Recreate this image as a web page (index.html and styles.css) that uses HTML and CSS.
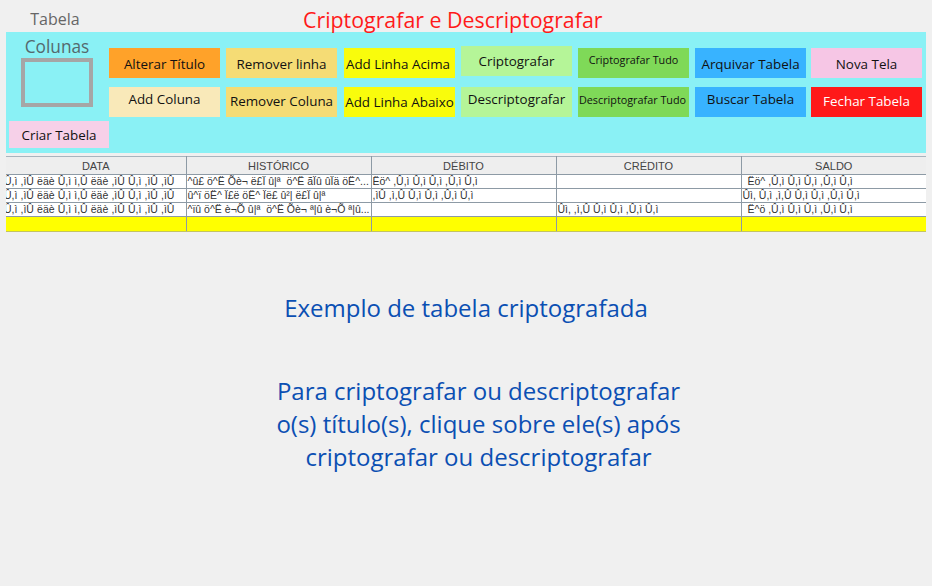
FILE: index.html
```html
<!DOCTYPE html>
<html lang="pt">
<head>
<meta charset="utf-8">
<title>Criptografar e Descriptografar</title>
<link rel="stylesheet" href="styles.css">
</head>
<body>
<header class="top">
  <div class="top-label">Tabela</div>
  <h1 class="top-title">Criptografar e Descriptografar</h1>
</header>
<section class="panel">
  <div class="cols-block">
    <div class="cols-label">Colunas</div>
    <div class="cols-box"></div>
  </div>
  <div class="btn r1 orange">Alterar Título</div>
  <div class="btn r1 sand">Remover linha</div>
  <div class="btn r1 yellow nudge">Add Linha Acima</div>
  <div class="btn r1 hi lime">Criptografar</div>
  <div class="btn r1 green small up">Criptografar Tudo</div>
  <div class="btn r1 blue">Arquivar Tabela</div>
  <div class="btn r1 pink">Nova Tela</div>
  <div class="btn r2 cream up">Add Coluna</div>
  <div class="btn r2 sand raised">Remover Coluna</div>
  <div class="btn r2 yellow">Add Linha Abaixo</div>
  <div class="btn r2 lime up">Descriptografar</div>
  <div class="btn r2 green small tight">Descriptografar Tudo</div>
  <div class="btn r2 blue up">Buscar Tabela</div>
  <div class="btn r2 red raised">Fechar Tabela</div>
  <div class="btn create">Criar Tabela</div>
</section>
<table class="grid">
  <colgroup><col class="c1"><col class="c2"><col class="c3"><col class="c4"><col class="c5"></colgroup>
  <thead>
    <tr><th>DATA</th><th>HISTÓRICO</th><th>DÉBITO</th><th>CRÉDITO</th><th>SALDO</th></tr>
  </thead>
  <tbody>
    <tr><td class="clip">Û,ì ,ìÛ ëäè Û,ì ì,Û ëäè ,ìÛ Û,ì ,ìÛ ,ìÛ</td><td class="left">^û£ ö^Ë Õè¬ ë£Ï û|ª  ö^Ë ãÏû ûÏä öË^...</td><td class="left">Ëö^ ,Û,ì Û,ì Û,ì ,Û,ì Û,ì</td><td></td><td class="mid">Ëö^ ,Û,ì Û,ì Û,ì ,Û,ì Û,ì</td></tr>
    <tr><td class="clip">Û,ì ,ìÛ ëäè Û,ì ì,Û ëäè ,ìÛ Û,ì ,ìÛ ,ìÛ</td><td class="left">û^ï öË^ Ï£ë öË^ Ïë£ û²| ë£Ï û|ª</td><td class="left">,ìÛ ,ì,Û Û,ì Û,ì ,Û,ì Û,ì</td><td></td><td class="left">Ûì, Û,ì ,ì,Û Û,ì Û,ì ,Û,ì Û,ì</td></tr>
    <tr><td class="clip">Û,ì ,ìÛ ëäè Û,ì ì,Û ëäè ,ìÛ Û,ì ,ìÛ ,ìÛ</td><td class="left">^ïû ö^Ë è¬Õ û|ª  ö^Ë Õè¬ ª|û è¬Õ ª|û...</td><td></td><td class="left">Ûì, ,ì,Û Û,ì Û,ì ,Û,ì Û,ì</td><td class="mid">Ë^ö ,Û,ì Û,ì Û,ì ,Û,ì Û,ì</td></tr>
    <tr class="total"><td></td><td></td><td></td><td></td><td></td></tr>
  </tbody>
</table>
<main class="notes">
  <p class="note-one">Exemplo de tabela criptografada</p>
  <p class="note-two">Para criptografar ou descriptografar<br>o(s) título(s), clique sobre ele(s) após<br>criptografar ou descriptografar</p>
</main>
</body>
</html>
```
FILE: styles.css
```css
* { box-sizing: border-box; }
html, body { margin: 0; padding: 0; }
body {
  width: 932px;
  height: 586px;
  overflow: hidden;
  background: #f0f0f0;
  font-family: "Open Sans", sans-serif;
  color: #111;
}
.top {
  display: flex;
  height: 32px;
  padding-top: 8px;
}
.top-label {
  width: 110px;
  padding-top: 1px;
  text-align: center;
  font-size: 16px;
  line-height: 20px;
  color: #666;
}
.top-title {
  margin: 0 0 0 193px;
  font-size: 21.35px;
  line-height: 24px;
  font-weight: 400;
  color: #ff1a1a;
  white-space: nowrap;
}
.panel {
  width: 920px;
  height: 121px;
  margin: 0 0 0 6px;
  padding: 5px 0 0 3px;
  background: #8af1f5;
  display: grid;
  grid-template-columns: 100px 117px 118px 117px 117px 117px 116px 111px;
  grid-template-rows: 50px 34px 27px;
  justify-content: start;
}
.cols-block {
  grid-column: 1;
  grid-row: 1 / span 2;
  padding-left: 12px;
}
.cols-label {
  width: 72px;
  text-align: center;
  font-size: 17.3px;
  line-height: 20px;
  color: #55696e;
}
.cols-box {
  width: 72px;
  height: 49px;
  margin-top: 1px;
  border: 4px solid #a6a6a6;
}
.btn {
  width: 111px;
  height: 30px;
  display: flex;
  align-items: center;
  justify-content: center;
  font-size: 13.4px;
  line-height: 18px;
  white-space: nowrap;
}
.r1 { grid-row: 1; align-self: end; margin-bottom: 9px; padding-top: 1px; }
.r1.hi { margin-bottom: 11px; padding-top: 0; }
.r2 { grid-row: 2; align-self: start; padding-bottom: 1px; }
.btn.up { padding-top: 0; padding-bottom: 6px; }
.btn.raised { padding-bottom: 3px; }
.btn.tight { padding-bottom: 5px; padding-right: 2px; }
.btn.nudge { padding-right: 3px; }
.btn.small { font-size: 10.8px; }
.orange { background: #ffa229; }
.sand { background: #f5dc75; }
.yellow { background: #f9fc0c; }
.cream { background: #f9e9b9; }
.lime { background: #b5f598; }
.green { background: #7fd958; }
.blue { background: #38b3ff; }
.pink { background: #f6c6e5; }
.red { background: #ff1919; color: #fff; }
.create {
  grid-column: 1;
  grid-row: 3;
  width: 100px;
  height: 27px;
  background: #f6d0e8;
}
.grid {
  width: 920px;
  height: 75px;
  margin: 3px 0 0 6px;
  border-collapse: collapse;
  table-layout: fixed;
  font-family: "Liberation Sans", Arial, sans-serif;
  font-size: 10.5px;
  color: #333;
}
.c1 { width: 180px; }
.c2 { width: 185px; }
.c3 { width: 185px; }
.c4 { width: 185px; }
.c5 { width: 185px; }
.grid th {
  height: 18px;
  padding: 0;
  background: #eeeeee;
  border-top: 1px solid #a8b4bd;
  border-bottom: 1px solid #8d9aa5;
  border-right: 1px solid #8d9aa5;
  font-size: 11px;
  font-weight: 400;
  color: #444;
}
.grid td {
  height: 14px;
  padding: 0 0 1px;
  background: #fff;
  border-bottom: 1px solid #8d9aa5;
  border-right: 1px solid #8d9aa5;
  white-space: pre;
  overflow: hidden;
  line-height: 12px;
}
.grid th:last-child, .grid td:last-child { border-right: 0; }
.grid td.left { padding-left: 1px; }
.grid td.mid { padding-left: 6px; }
.grid td.clip { text-indent: -2px; word-spacing: 0.2px; }
.grid .total td {
  height: 15px;
  background: #ffff00;
  border-bottom: 1px solid #c4c460;
}
.notes {
  text-align: center;
  font-size: 24px;
  line-height: 33px;
  color: #0b4fb3;
}
.notes p { margin: 0; }
.note-one { padding-top: 59px; }
.notes .note-two { margin-top: 50px; padding-left: 25px; }
```
